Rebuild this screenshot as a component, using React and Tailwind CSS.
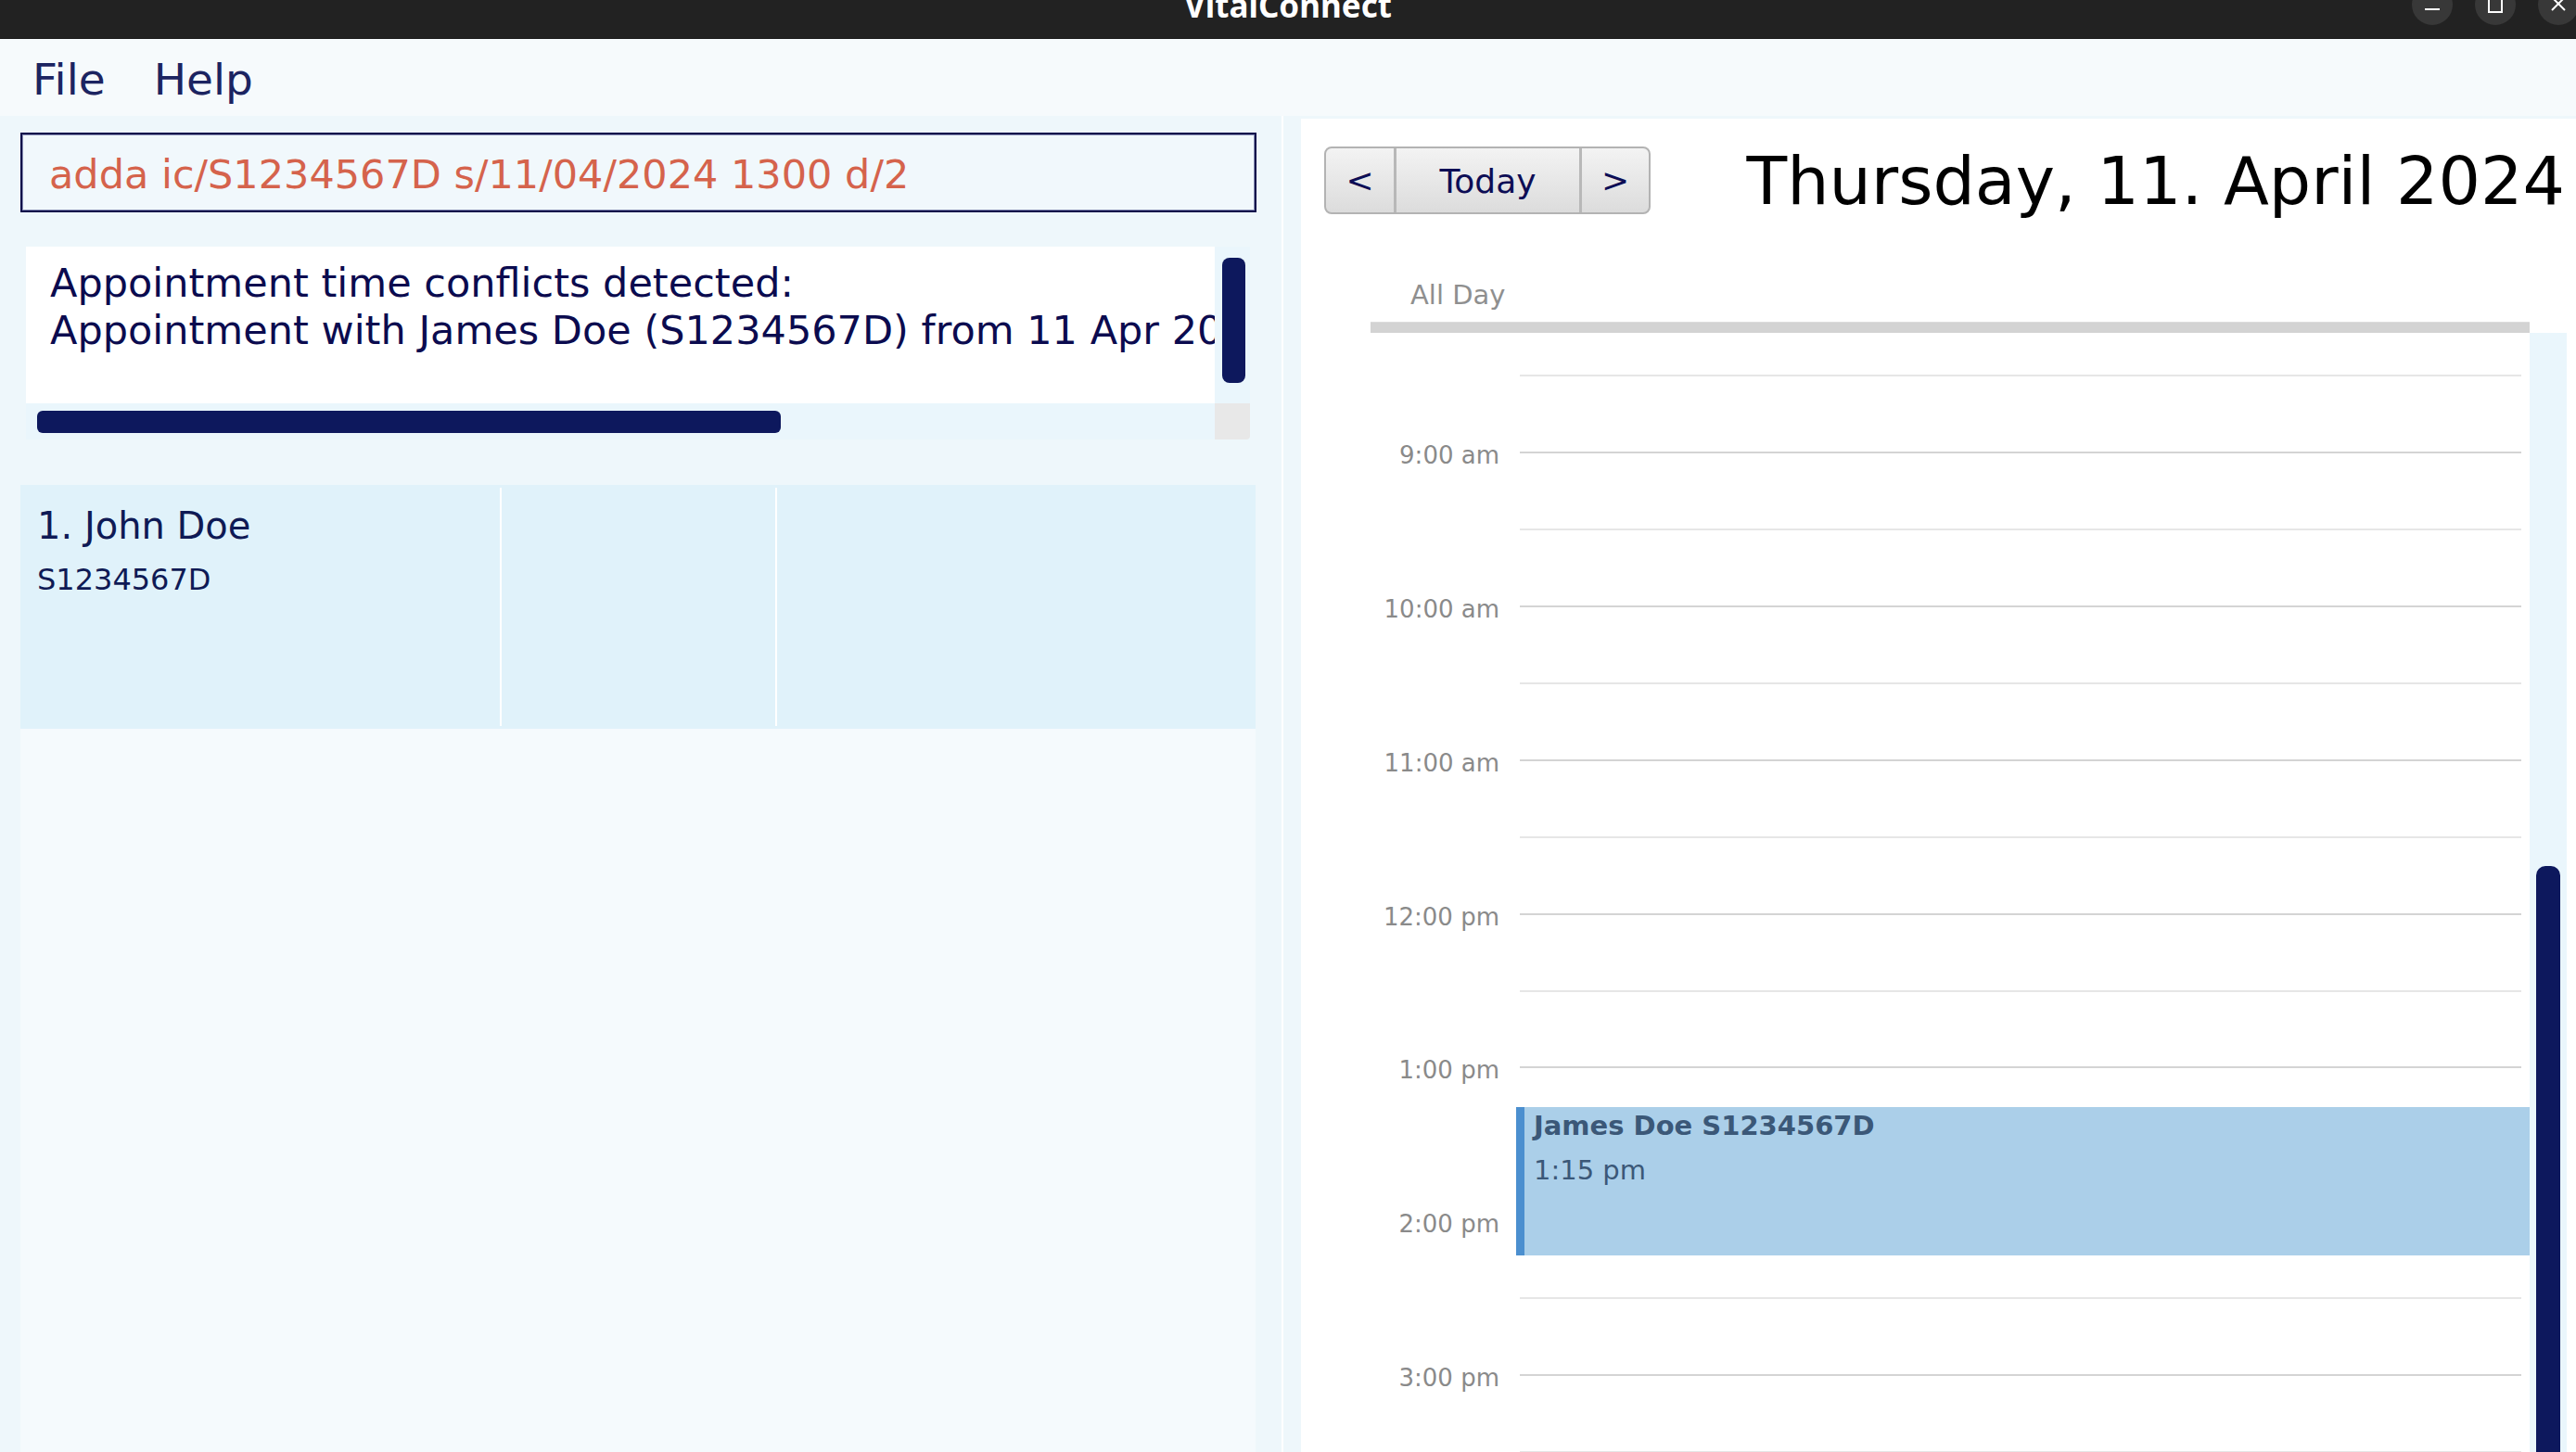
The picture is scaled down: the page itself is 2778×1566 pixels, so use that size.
import React from 'react';

const slots = ['', '9:00 am', '', '10:00 am', '', '11:00 am', '', '12:00 pm', '', '1:00 pm', '', '2:00 pm', '', '3:00 pm', '', '4:00 pm'];

function TitleBar() {
  return (
    <div className="relative h-[42px] bg-[#222222] border-b border-[#181818] flex justify-center overflow-hidden">
      <div className="mt-[-12px] text-[35px] leading-none font-bold text-white font-['Noto_Sans',sans-serif]">VitalConnect</div>
      <div className="absolute right-[-3px] top-[-17px] flex gap-[24px]">
        <div className="w-[44px] h-[44px] rounded-full bg-[#383838] flex items-center justify-center">
          <div className="w-[16px] h-[2px] bg-white mt-[10px]" />
        </div>
        <div className="w-[44px] h-[44px] rounded-full bg-[#383838] flex items-center justify-center">
          <div className="w-[16px] h-[20px] border-2 border-white mt-[-2px]" />
        </div>
        <div className="w-[44px] h-[44px] rounded-full bg-[#383838] flex items-center justify-center">
          <svg width="16" height="16" viewBox="0 0 16 16" className="mt-[-2px]">
            <path d="M1 1 L15 15 M15 1 L1 15" stroke="white" strokeWidth="2" />
          </svg>
        </div>
      </div>
    </div>
  );
}

function MenuBar() {
  return (
    <div className="h-[83px] bg-[#f6fafc] flex items-center pl-[35px] pt-[6px] gap-[52px] text-[47px] text-[#1c2461]">
      <span>File</span>
      <span>Help</span>
    </div>
  );
}

function LeftPanel() {
  return (
    <div className="w-[1382px] bg-[#eef7fb] flex flex-col pt-[18px] pl-[22px] pr-[27px]">
      {/* command box */}
      <div className="h-[86px] border-2 border-[#08084a] shadow-[inset_0_0_0_1px_#8a90b4] bg-[#f1f8fc] flex items-center pl-[29px] pt-[4px] text-[43px] leading-[50px] text-[#d5634c] whitespace-nowrap">
        adda ic/S1234567D s/11/04/2024 1300 d/2
      </div>

      {/* result display */}
      <div className="mt-[37px] ml-[6px] w-[1320px] flex flex-col">
        <div className="flex h-[169px]">
          <div className="w-[1282px] bg-white overflow-hidden pl-[26px] pt-[14px] text-[43px] leading-[51px] text-[#0b0b4f] whitespace-nowrap">
            <div>Appointment time conflicts detected:</div>
            <div>Appointment with James Doe (S1234567D) from 11 Apr 2024 1:15 PM to 11 Apr 2024 2:13 PM</div>
          </div>
          <div className="w-[38px] bg-[#eaf6fc] pl-[8px] pt-[12px]">
            <div className="w-[25px] h-[135px] rounded-[8px] bg-[#0d185d]" />
          </div>
        </div>
        <div className="flex h-[39px]">
          <div className="w-[1282px] bg-[#eaf6fc] pl-[12px] pt-[8px]">
            <div className="w-[802px] h-[24px] rounded-[6px] bg-[#0d185d]" />
          </div>
          <div className="w-[38px] bg-[#e8e8e8] rounded-br-[4px]" />
        </div>
      </div>

      {/* person list */}
      <div className="mt-[49px] flex-1 bg-[#f5fafd] w-[1332px]">
        <div className="h-[263px] bg-[#e0f2fa] flex items-stretch">
          <div className="w-[517px] pl-[18px] pt-[21px] text-[#0f1a55]">
            <div className="text-[40px] leading-[46px]">1. John Doe</div>
            <div className="mt-[17px] text-[32px] leading-[37px]">S1234567D</div>
          </div>
          <div className="w-[2px] my-[3px] bg-white" />
          <div className="w-[295px]" />
          <div className="w-[2px] my-[3px] bg-white" />
          <div className="flex-1" />
        </div>
      </div>
    </div>
  );
}

function NavButtons() {
  return (
    <div className="flex h-[73px] border-2 border-[#b3b3b3] rounded-[8px] overflow-hidden bg-gradient-to-b from-[#f3f3f3] to-[#dcdcdc] text-[36px] text-[#0d0d55]">
      <div className="w-[73px] flex items-center justify-center">&lt;</div>
      <div className="w-[3px] bg-[#b8b8b8]" />
      <div className="w-[197px] flex items-center justify-center pt-[2px]">Today</div>
      <div className="w-[3px] bg-[#b8b8b8]" />
      <div className="flex-1 flex items-center justify-center">&gt;</div>
    </div>
  );
}

function Calendar() {
  return (
    <div className="flex-1 flex flex-col pt-[3px] bg-[#eef7fb] min-h-0">
      <div className="flex-1 bg-white flex flex-col min-h-0">
        {/* header */}
        <div className="flex items-center mt-[30px] pl-[25px] pr-[12px] h-[73px]">
          <div className="w-[352px]">
            <NavButtons />
          </div>
          <div className="ml-auto text-[71.5px] leading-[73px] pt-[2px] text-black whitespace-nowrap">Thursday, 11. April 2024</div>
        </div>

        <div className="ml-[75px] mr-[10px] flex-1 flex flex-col min-h-0">
          {/* all day */}
          <div className="mt-[70px] pl-[43px] text-[29px] leading-[34px] text-[#8f8f8f]">All Day</div>
          <div className="mt-[12px] mr-[40px] h-[12px] bg-[#d3d3d3] border-t border-[#dcdcdc]" />

          {/* day grid */}
          <div className="flex-1 flex min-h-0">
            <div className="relative w-[1250px] overflow-hidden pt-[5px]">
              {slots.map((label, i) => (
                <div key={i} className="flex items-center h-[82.9px]">
                  <div className="w-[139px] mt-[6px] text-right text-[26px] leading-none text-[#8a8a8a]">{label}</div>
                  <div className={`ml-[22px] flex-1 h-[2px] ${label ? 'bg-[#d4d4d4]' : 'bg-[#e6e6e6]'}`} />
                  <div className="w-[9px]" />
                </div>
              ))}
              <div className="absolute top-[835px] left-[157px] w-[1093px] h-[160px] bg-[#abcfe9] border-l-[9px] border-[#4b8fcf] pl-[10px] pt-[3px] text-[29px] leading-[34px] text-[#3b5878]">
                <div className="font-bold">James Doe S1234567D</div>
                <div className="mt-[14px]">1:15 pm</div>
              </div>
            </div>
            <div className="w-[40px] bg-[#eaf6fc] pl-[7px] pt-[575px]">
              <div className="w-[26px] h-[700px] rounded-t-[10px] bg-[#0d185d]" />
            </div>
          </div>
        </div>
      </div>
    </div>
  );
}

export default function App() {
  return (
    <div className="w-[2778px] h-[1566px] overflow-hidden flex flex-col bg-white font-['DejaVu_Sans',sans-serif]">
      <TitleBar />
      <MenuBar />
      <div className="flex flex-1 min-h-0">
        <LeftPanel />
        <div className="w-[2px] bg-white" />
        <div className="w-[19px] bg-[#eef7fb]" />
        <Calendar />
      </div>
    </div>
  );
}
